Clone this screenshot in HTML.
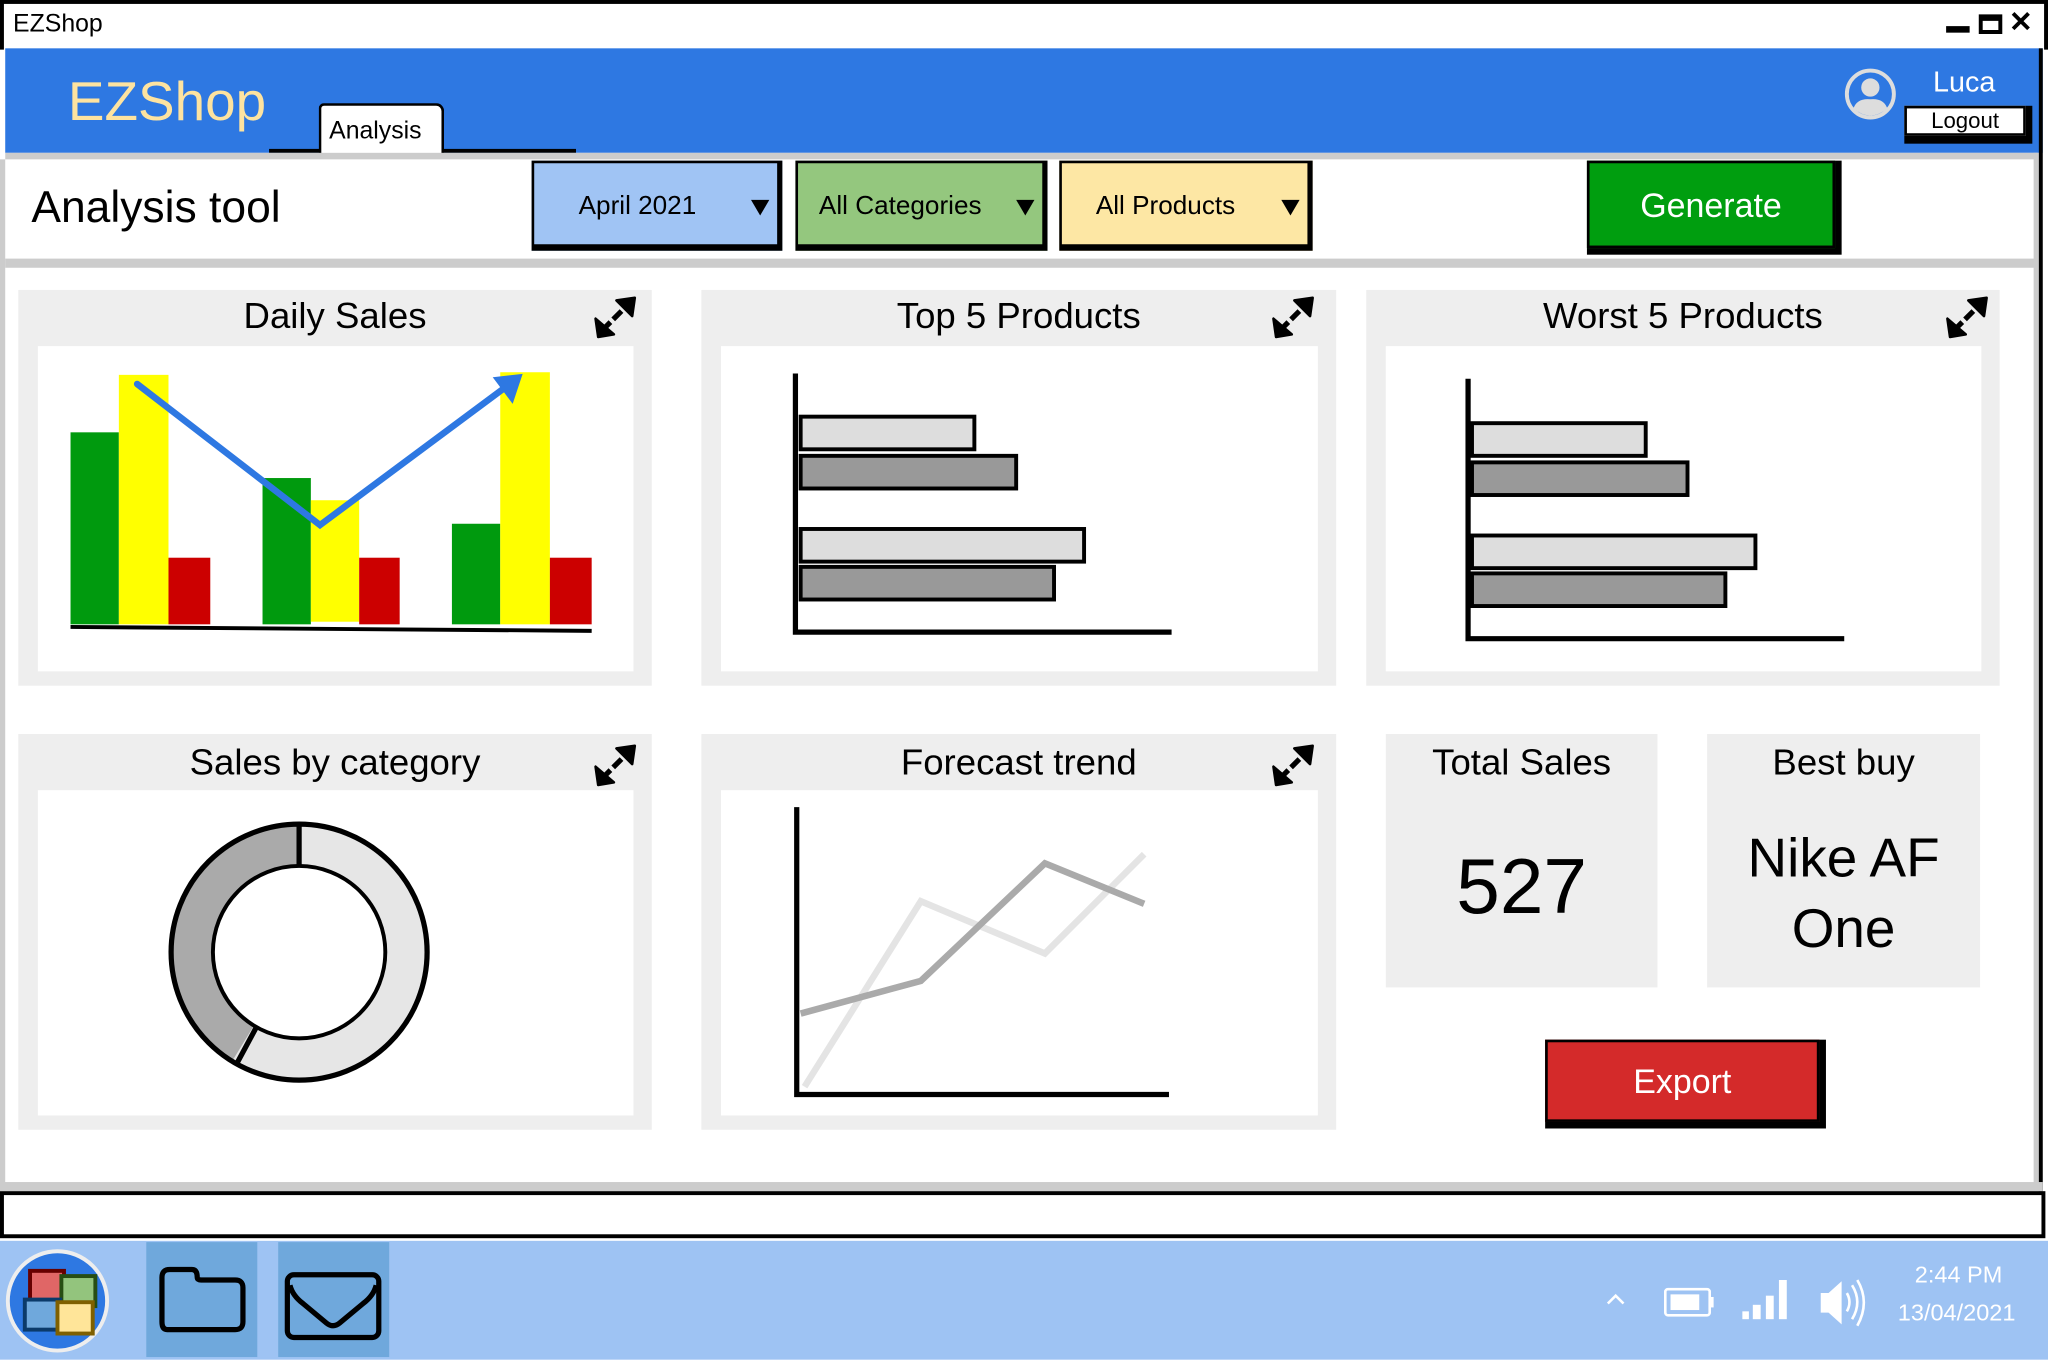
<!DOCTYPE html>
<html><head><meta charset="utf-8"><style>
*{margin:0;padding:0;box-sizing:border-box}
html,body{width:2048px;height:1360px;overflow:hidden;background:#fff}
#w{position:absolute;left:0;top:0;width:1568px;height:1041px;transform:scale(1.30612);transform-origin:0 0;font-family:"Liberation Sans",sans-serif;background:#fff}
.a{position:absolute}
.card{position:absolute;background:#eee}
.card .t{position:absolute;left:0;right:0;top:4px;text-align:center;font-size:28px;color:#000}
.card .in{position:absolute;background:#fff}
.dd{position:absolute;top:123px;height:69px;border:2px solid #000;border-right-width:4px;border-bottom-width:5px;font-size:20px;line-height:66px;padding-left:34px}
.dd:after{content:"";position:absolute;right:6px;top:28px;border-left:7px solid transparent;border-right:7px solid transparent;border-top:12px solid #000}
</style></head><body><div id="w">
<div class="a" style="left:0;top:0;width:1568px;height:38px;border-top:3px solid #000;border-left:3px solid #000;border-right:3px solid #000"></div>
<div class="a" style="left:10px;top:8px;font-size:19px">EZShop</div>
<div class="a" style="left:1490px;top:20px;width:18px;height:5px;background:#000"></div>
<div class="a" style="left:1515px;top:11px;width:18px;height:15px;border:3px solid #000;border-top-width:5px"></div>
<div class="a" style="left:1538px;top:4px;font-size:22px;font-weight:bold">✕</div>
<div class="a" style="left:4px;top:37px;width:1560px;height:80px;background:#2e78e2"></div>
<div class="a" style="left:52px;top:54px;font-size:42px;color:#fde3a0">EZShop</div>
<div class="a" style="left:206px;top:114px;width:235px;height:3px;background:#000"></div>
<div class="a" style="left:244px;top:79px;width:96px;height:40px;background:#fff;border:2px solid #000;border-bottom:none;border-radius:4px 6px 0 0;font-size:19px;padding:9px 0 0 6px">Analysis</div>
<svg class="a" style="left:1410px;top:50px" width="44" height="44"><circle cx="22" cy="22" r="18" fill="none" stroke="#ddd" stroke-width="3"/><circle cx="22" cy="17" r="7" fill="#ddd"/><path d="M9 33 Q12 25 22 26 Q32 25 35 33 Q22 44 9 33Z" fill="#ddd"/></svg>
<div class="a" style="left:1480px;top:50px;font-size:22px;color:#fff">Luca</div>
<div class="a" style="left:1458px;top:81px;width:98px;height:29px;background:#000"></div>
<div class="a" style="left:1458px;top:81px;width:93px;height:23px;background:#fff;border:2px solid #000;text-align:center;font-size:17px;line-height:20px">Logout</div>
<div class="a" style="left:4px;top:117px;width:1556px;height:5px;background:#ccc"></div>
<div class="a" style="left:4px;top:198px;width:1556px;height:7px;background:#ccc"></div>
<div class="a" style="left:0;top:122px;width:4px;height:790px;background:#ccc"></div>
<div class="a" style="left:1557px;top:117px;width:4px;height:795px;background:#ccc"></div>
<div class="a" style="left:1561px;top:37px;width:3px;height:880px;background:#000"></div>
<div class="a" style="left:24px;top:140px;font-size:34px">Analysis tool</div>
<div class="dd" style="left:407px;width:192px;background:#a0c4f4">April 2021</div>
<div class="dd" style="left:609px;width:193px;background:#94c77e;padding-left:16px">All Categories</div>
<div class="dd" style="left:811px;width:194px;background:#fde7a4;padding-left:26px">All Products</div>
<div class="a" style="left:1215px;top:123px;width:195px;height:72px;background:#000"></div>
<div class="a" style="left:1215px;top:123px;width:190px;height:67px;background:#009e0f;border:2px solid #000;color:#fff;font-size:26px;text-align:center;line-height:64px">Generate</div>
<div class="card" style="left:14px;top:222px;width:485px;height:303px"><div class="t">Daily Sales</div><div class="in" style="left:15px;top:43px;width:456px;height:249px"></div></div>
<div class="card" style="left:537px;top:222px;width:486px;height:303px"><div class="t">Top 5 Products</div><div class="in" style="left:15px;top:43px;width:457px;height:249px"></div></div>
<div class="card" style="left:1046px;top:222px;width:485px;height:303px"><div class="t">Worst 5 Products</div><div class="in" style="left:15px;top:43px;width:456px;height:249px"></div></div>
<div class="card" style="left:14px;top:562px;width:485px;height:303px"><div class="t" style="top:6px">Sales by category</div><div class="in" style="left:15px;top:43px;width:456px;height:249px"></div></div>
<div class="card" style="left:537px;top:562px;width:486px;height:303px"><div class="t" style="top:6px">Forecast trend</div><div class="in" style="left:15px;top:43px;width:457px;height:249px"></div></div>
<div class="card" style="left:1061px;top:562px;width:208px;height:194px"><div class="t" style="top:6px">Total Sales</div><div class="a" style="left:0;right:0;top:82px;text-align:center;font-size:60px">527</div></div>
<div class="card" style="left:1307px;top:562px;width:209px;height:194px"><div class="t" style="top:6px">Best buy</div><div class="a" style="left:0;right:0;top:68px;text-align:center;font-size:42px;line-height:54px">Nike AF<br>One</div></div>
<div class="a" style="left:1183px;top:796px;width:215px;height:68px;background:#000"></div>
<div class="a" style="left:1183px;top:796px;width:210px;height:63px;background:#d42a2a;border:2px solid #000;color:#fff;font-size:26px;text-align:center;line-height:60px">Export</div>
<svg class="a" style="left:0;top:0" width="1568" height="1041">
<defs><g id="ex"><path d="M5 25 L25 5" stroke="#000" stroke-width="4" stroke-dasharray="9 3"/><path d="M16 2 L30 0 L28 14 Z M0 16 L2 30 L14 28 Z" fill="#000" stroke="#000" stroke-width="2" stroke-linejoin="round"/></g></defs>
<use href="#ex" x="456" y="228"/><use href="#ex" x="975" y="228"/><use href="#ex" x="1491" y="228"/><use href="#ex" x="456" y="571"/><use href="#ex" x="975" y="571"/>
<rect x="54" y="331" width="37" height="147" fill="#009a0e"/><rect x="91" y="287" width="38" height="191" fill="#ff0"/><rect x="129" y="427" width="32" height="51" fill="#c00"/>
<rect x="201" y="366" width="37" height="112" fill="#009a0e"/><rect x="238" y="383" width="37" height="93" fill="#ff0"/><rect x="275" y="427" width="31" height="51" fill="#c00"/>
<rect x="346" y="401" width="37" height="77" fill="#009a0e"/><rect x="383" y="285" width="38" height="193" fill="#ff0"/><rect x="421" y="427" width="32" height="51" fill="#c00"/>
<path d="M54 480 Q250 482 453 483" stroke="#000" stroke-width="3" fill="none"/>
<path d="M105 294 L245 402 L393 292" stroke="#2e78e2" stroke-width="5" fill="none" stroke-linecap="round"/>
<path d="M380 290 L398 288 L392 306 Z" fill="#2e78e2" stroke="#2e78e2" stroke-width="3"/>
<path d="M609 286 V484 H897" stroke="#000" stroke-width="4" fill="none"/>
<g stroke="#000" stroke-width="3"><rect x="613" y="319" width="133" height="25" fill="#ddd"/><rect x="613" y="349" width="165" height="25" fill="#999"/><rect x="613" y="405" width="217" height="25" fill="#ddd"/><rect x="613" y="434" width="194" height="25" fill="#999"/></g>
<path d="M1124 290 V489 H1412" stroke="#000" stroke-width="4" fill="none"/>
<g stroke="#000" stroke-width="3"><rect x="1127" y="324" width="133" height="25" fill="#ddd"/><rect x="1127" y="354" width="165" height="25" fill="#999"/><rect x="1127" y="410" width="217" height="25" fill="#ddd"/><rect x="1127" y="439" width="194" height="25" fill="#999"/></g>
<circle cx="229" cy="729" r="82" fill="none" stroke="#e6e6e6" stroke-width="32"/>
<path d="M229 647 A82 82 0 0 0 186 799" fill="none" stroke="#aaa" stroke-width="32"/>
<circle cx="229" cy="729" r="98" fill="none" stroke="#000" stroke-width="4"/>
<circle cx="229" cy="729" r="66" fill="none" stroke="#000" stroke-width="3"/>
<path d="M229 631 V663 M196 787 L182 813" stroke="#000" stroke-width="4"/>
<path d="M616 832 L705 690 L800 730 L876 654" stroke="#e4e4e4" stroke-width="5" fill="none"/>
<path d="M613 776 L705 751 L800 661 L876 692" stroke="#aaa" stroke-width="5" fill="none"/>
<path d="M610 618 V838 H895" stroke="#000" stroke-width="4" fill="none"/>
</svg>
<div class="a" style="left:0;top:905px;width:1564px;height:7px;background:#ccc"></div>
<div class="a" style="left:0;top:912px;width:1566px;height:36px;background:#fff;border:3px solid #000"></div>
<div class="a" style="left:0;top:950px;width:1568px;height:91px;background:#9ec3f3"></div>
<div class="a" style="left:112px;top:951px;width:85px;height:88px;background:#6fa8dc"></div>
<div class="a" style="left:213px;top:951px;width:85px;height:88px;background:#6fa8dc"></div>
<svg class="a" style="left:0;top:950px" width="1568" height="91">
<circle cx="44" cy="46" r="38" fill="#2e78e2" stroke="#eee" stroke-width="3"/>
<rect x="23" y="23" width="26" height="27" fill="#e06666" stroke="#600" stroke-width="3"/>
<rect x="47" y="27" width="26" height="23" fill="#93c47d" stroke="#274e13" stroke-width="3"/>
<rect x="19" y="45" width="27" height="23" fill="#6fa8dc" stroke="#0b3a6a" stroke-width="3"/>
<rect x="44" y="47" width="27" height="24" fill="#ffe599" stroke="#7f6000" stroke-width="3"/>
<path d="M124 28 Q124 22 130 22 H147 Q151 22 151 28 Q151 30 154 30 H180 Q186 30 186 36 V62 Q186 68 180 68 H128 Q124 68 124 62 Z" fill="none" stroke="#000" stroke-width="4"/>
<rect x="220" y="26" width="70" height="48" rx="5" fill="none" stroke="#000" stroke-width="4"/>
<path d="M222 34 Q224 42 232 48 L250 63 Q255 67 260 63 L278 48 Q286 42 288 34" fill="none" stroke="#000" stroke-width="4"/>
<path d="M1231 48 L1237 42 L1243 48" stroke="#fff" stroke-width="2" fill="none"/>
<rect x="1275" y="37" width="34" height="20" rx="2" fill="none" stroke="#fff" stroke-width="2"/><rect x="1279" y="41" width="22" height="12" fill="#fff"/><rect x="1309" y="43" width="3" height="8" fill="#fff"/>
<g fill="#fff"><rect x="1334" y="54" width="5" height="6"/><rect x="1342" y="49" width="6" height="11"/><rect x="1352" y="42" width="6" height="18"/><rect x="1362" y="30" width="6" height="30"/></g>
<path d="M1394 40 H1400 L1410 31 V64 L1400 55 H1394 Z" fill="#fff"/>
<path d="M1414 40 Q1418 47 1414 54 M1418 34 Q1426 47 1418 60 M1422 30 Q1432 47 1422 65" stroke="#fff" stroke-width="2" fill="none"/>
</svg>
<div class="a" style="left:1466px;top:966px;font-size:18px;color:#fff">2:44 PM</div>
<div class="a" style="left:1453px;top:995px;font-size:18px;color:#fff">13/04/2021</div>
</div></body></html>
